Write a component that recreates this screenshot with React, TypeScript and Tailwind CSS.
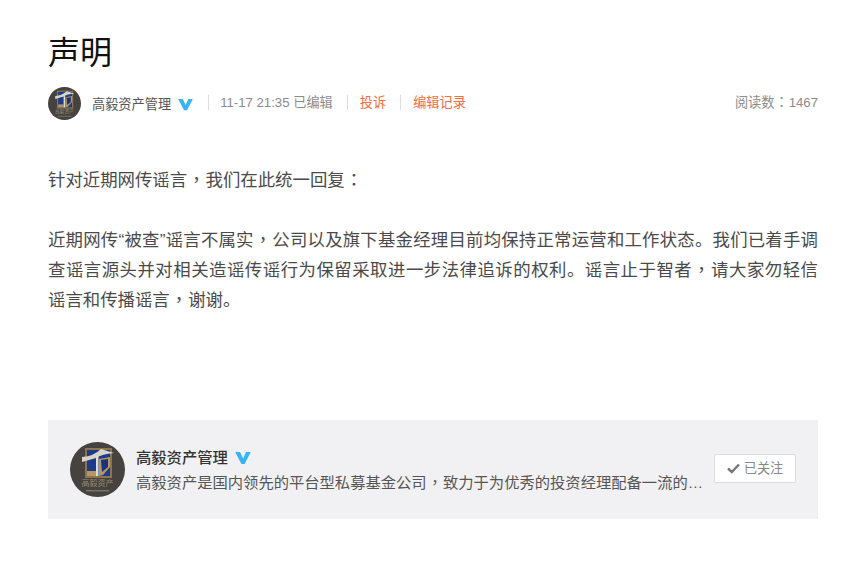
const FONT = "font-['Liberation_Sans','Noto_Sans_CJK_SC',sans-serif]";

function Avatar({ size }: { size: number }) {
  return (
    <svg width={size} height={size} viewBox="0 0 55 55" className="shrink-0">
      <circle cx="27.5" cy="27.5" r="27.5" fill="#45423f" />
      <rect x="15" y="6" width="27" height="30" fill="#8d7550" />
      <rect x="17" y="8" width="23" height="26" fill="#1b3b8c" />
      <path d="M29 17 L40 15 L40 25 L33 33 L29 34 Z" fill="#b8965f" />
      <path d="M31 18 L38 17 L38 25 L32 30 Z" fill="#16337f" />
      <path d="M17 29 L26 29 L26 34 L17 34 Z" fill="#b8965f" />
      <path d="M12 15 Q24 14 31 7 L44 11 Q32 12 26 16 Q19 18 12 20 Z" fill="#d9d4c4" />
      <rect x="26" y="14" width="2.5" height="20" fill="#e2dccb" />
      <text x="27.5" y="44" textAnchor="middle" fontSize="8" fill="#9a8a72" fontFamily="'Noto Sans CJK SC', sans-serif">高毅资产</text>
      <rect x="16" y="48" width="23" height="1.5" fill="#77736d" />
    </svg>
  );
}

function VBadge({ w, h }: { w: number; h: number }) {
  return (
    <svg width={w} height={h} viewBox="0 0 16 13" className="shrink-0">
      <path d="M0.2 0.5 H5 L8.2 7 L11 0.5 H15.8 L9.6 12.6 H6.4 Z" fill="#36b4f5" />
    </svg>
  );
}

function Sep() {
  return <span className="h-[15px] w-px bg-[#dcdcdc]" />;
}

function Mark({ c }: { c: string }) {
  return <span className="font-['Noto_Sans_CJK_TC',sans-serif] mx-[0.5px] leading-[0]">{c}</span>;
}

export default function App() {
  return (
    <div className={`${FONT} w-[855px] h-[561px] bg-white px-[48px] pt-[31px] overflow-hidden`}>
      <div className="w-[770px]">
        <h1 className="text-[32px] leading-[44px] text-[#111] font-normal">声明</h1>

        <div className="mt-[12px] flex items-center h-[33px]">
          <Avatar size={33} />
          <span className="ml-[11px] text-[13.2px] leading-[33px] text-[#555] mt-[1px]">高毅资产管理</span>
          <span className="ml-[7px] mt-[1px] flex"><VBadge w={15} h={13} /></span>
          <span className="ml-[15px] flex items-center -mt-[2px]"><Sep /></span>
          <span className="ml-[11px] text-[13.2px] text-[#8c8c8c] -mt-[2px]">11-17 21:35 已编辑</span>
          <span className="ml-[14px] flex items-center -mt-[2px]"><Sep /></span>
          <span className="ml-[12px] text-[13.2px] text-[#f26d3f] -mt-[2px]">投诉</span>
          <span className="ml-[14px] flex items-center -mt-[2px]"><Sep /></span>
          <span className="ml-[12px] text-[13.2px] text-[#f26d3f] -mt-[2px]">编辑记录</span>
          <span className="ml-auto text-[13.2px] text-[#8c8c8c] -mt-[2px]">阅读数<Mark c="：" />1467</span>
        </div>

        <div className="mt-[45px] text-[17.4px] leading-[30px] text-[#4a4a4a]">
          <p>针对近期网传谣言<Mark c="，" />我们在此统一回复<Mark c="：" /></p>
          <p className="mt-[30px]">
            <span className="block whitespace-nowrap text-justify [text-align-last:justify]">
              近期网传“被查”谣言不属实<Mark c="，" />公司以及旗下基金经理目前均保持正常运营和工作状态。我们已着手调
            </span>
            <span className="block whitespace-nowrap text-justify [text-align-last:justify]">
              查谣言源头并对相关造谣传谣行为保留采取进一步法律追诉的权利。谣言止于智者<Mark c="，" />请大家勿轻信
            </span>
            <span className="block whitespace-nowrap">
              谣言和传播谣言<Mark c="，" />谢谢。
            </span>
          </p>
        </div>

        <div className="mt-[105px] h-[99px] bg-[#f1f1f3] flex items-center pl-[22px] pr-[22px]">
          <Avatar size={55} />
          <div className="ml-[11px] mt-[3px] min-w-0">
            <div className="flex items-center h-[20px]">
              <span className="text-[15.3px] font-medium text-[#333]">高毅资产管理</span>
              <span className="ml-[7px] flex"><VBadge w={16} h={14} /></span>
            </div>
            <div className="mt-[4px] text-[15.3px] leading-[22px] text-[#555] whitespace-nowrap">
              高毅资产是国内领先的平台型私募基金公司<Mark c="，" />致力于为优秀的投资经理配备一流的…
            </div>
          </div>
          <button className="ml-auto -mt-[2px] w-[82px] h-[29px] rounded-[2px] border border-[#dcdcdc] bg-white flex items-center justify-center text-[13.2px] text-[#888]">
            <svg width="13" height="11" viewBox="0 0 13 11" className="mr-[4px]">
              <path d="M1 5.5 L4.8 9 L12 1.5" fill="none" stroke="#777" strokeWidth="2.4" />
            </svg>
            已关注
          </button>
        </div>
      </div>
    </div>
  );
}
